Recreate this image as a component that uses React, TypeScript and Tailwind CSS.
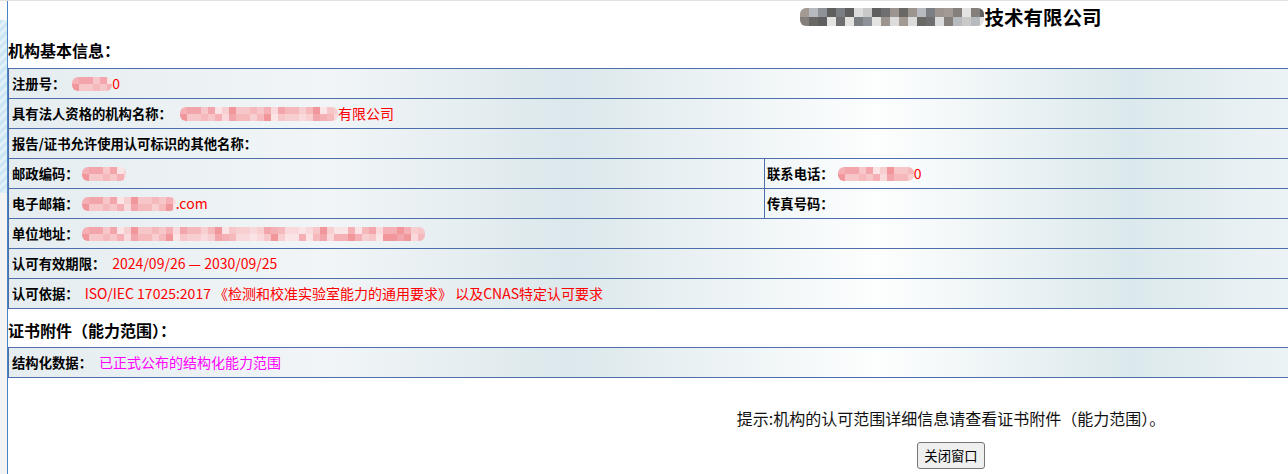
import React from 'react';
import clsx from 'clsx';

// Soft pixelated blocks standing in for the redacted parts of the screenshot
const GREYS = ['#a39a93', '#6f6f71', '#8d9399', '#857f7b', '#9c958f', '#5f5f60', '#b7bbbf', '#dcdcdc', '#e3e3e2', '#6a6864', '#7b7e82', '#c9c9c9'];
const PINKS = ['#f4b0b4', '#f7c6c9', '#f9d9db', '#f1979c', '#f5b9bc', '#fbe4e5', '#f2a5aa', '#f8cfd1'];

function Mosaic({
  width,
  cell = 7,
  rows = 2,
  palette = PINKS,
  className,
}: {
  width: number;
  cell?: number;
  rows?: number;
  palette?: string[];
  className?: string;
}) {
  const cols = Math.ceil(width / cell);
  return (
    <span
      className={clsx('inline-flex shrink-0 flex-col overflow-hidden rounded-[6px] align-middle blur-[0.4px]', className)}
      style={{ width }}
    >
      {Array.from({ length: rows }).map((_, r) => (
        <span key={r} className="flex">
          {Array.from({ length: cols }).map((_, c) => (
            <span
              key={c}
              className="shrink-0"
              style={{
                width: cell,
                height: cell,
                backgroundColor: palette[(c * 5 + r * 3 + ((c * c) % 7)) % palette.length],
              }}
            />
          ))}
        </span>
      ))}
    </span>
  );
}

const rowBg =
  'bg-[linear-gradient(to_right,#e5edf0_0px,#f1f5f7_320px,#dce8ec_560px,#fdfefe_870px,#dce9ec_1120px,#eef4f6_1300px,#fafcfc_1886px)]';

function Row({ children }: { children: React.ReactNode }) {
  return <div className={clsx('flex h-[30px] border-b border-[#4d6ea8]', rowBg)}>{children}</div>;
}

function Label({ children }: { children: React.ReactNode }) {
  return <span className="shrink-0 text-[13.33px] font-bold text-black">{children}</span>;
}

export default function App() {
  return (
    <div className="h-[474px] w-full overflow-hidden bg-white font-['Noto_Sans_CJK_SC','Noto_Sans',sans-serif] text-black">
      <div className="h-px w-full bg-[#e2e2e2]" />
      <div className="flex h-[473px]">
        {/* left frame strip */}
        <div className="flex w-[7px] shrink-0 flex-col bg-[#f3f3f3]">
          <div className="h-[19px] bg-[#fbfbfb]" />
          <div className="h-[173px] bg-[repeating-linear-gradient(135deg,#cde6f6_0px,#cde6f6_3px,#e2f0fa_3px,#e2f0fa_6px)]" />
        </div>
        <div className="w-px shrink-0 bg-[#4a84c4]" />

        <div className="w-[1886px] shrink-0">
          {/* title */}
          <div className="flex h-[31px] items-center justify-center">
            <Mosaic width={184} cell={9} palette={GREYS} className="rounded-[2px]" />
            <span className="text-[19.5px] leading-[22px] font-bold">技术有限公司</span>
          </div>

          <div className="h-[36px] pt-[10px] text-[16px] leading-[16px] font-bold">机构基本信息：</div>

          <div className="border-t border-l border-[#4d6ea8] text-[14px]">
            <Row>
              <div className="flex items-center pl-[3px]">
                <Label>注册号：</Label>
                <Mosaic width={40} className="ml-[7px]" />
                <span className="text-[#ff0000]">0</span>
              </div>
            </Row>
            <Row>
              <div className="flex items-center pl-[3px]">
                <Label>具有法人资格的机构名称：</Label>
                <Mosaic width={158} className="ml-[8px]" />
                <span className="text-[#ff0000]">有限公司</span>
              </div>
            </Row>
            <Row>
              <div className="flex items-center pl-[3px]">
                <Label>报告/证书允许使用认可标识的其他名称：</Label>
              </div>
            </Row>
            <Row>
              <div className="flex w-[756px] items-center border-r border-[#4d6ea8] pl-[3px]">
                <Label>邮政编码：</Label>
                <Mosaic width={44} className="ml-[3px]" />
              </div>
              <div className="flex items-center pl-[2px]">
                <Label>联系电话：</Label>
                <Mosaic width={76} className="ml-[4px]" />
                <span className="text-[#ff0000]">0</span>
              </div>
            </Row>
            <Row>
              <div className="flex w-[756px] items-center border-r border-[#4d6ea8] pl-[3px]">
                <Label>电子邮箱：</Label>
                <Mosaic width={94} className="ml-[3px]" />
                <span className="text-[#ff0000]">.com</span>
              </div>
              <div className="flex items-center pl-[2px]">
                <Label>传真号码：</Label>
              </div>
            </Row>
            <Row>
              <div className="flex items-center pl-[3px]">
                <Label>单位地址：</Label>
                <Mosaic width={343} className="ml-[3px]" />
              </div>
            </Row>
            <Row>
              <div className="flex items-center pl-[3px]">
                <Label>认可有效期限：</Label>
                <span className="ml-[7px] text-[#ff0000]">2024/09/26 — 2030/09/25</span>
              </div>
            </Row>
            <Row>
              <div className="flex items-center pl-[3px]">
                <Label>认可依据：</Label>
                <span className="ml-[6px] text-[#ff0000]">
                  ISO/IEC 17025:2017 《检测和校准实验室能力的通用要求》 以及CNAS特定认可要求
                </span>
              </div>
            </Row>
          </div>

          <div className="h-[38px] pt-[13px] text-[16px] leading-[16px] font-bold">证书附件（能力范围）：</div>

          <div className="border-t border-l border-[#4d6ea8] text-[14px]">
            <Row>
              <div className="flex items-center pl-[3px]">
                <Label>结构化数据：</Label>
                <span className="ml-[7px] text-[#ff00ff]">已正式公布的结构化能力范围</span>
              </div>
            </Row>
          </div>

          <div className="mt-[30px] text-center text-[16px] leading-[20px] text-[#111]">
            提示:机构的认可范围详细信息请查看证书附件（能力范围）。
          </div>
          <div className="mt-[14px] flex justify-center">
            <button
              type="button"
              className="h-[27px] w-[68px] rounded-[3px] border border-[#767676] bg-[#efefef] text-[13.33px] text-black"
            >
              关闭窗口
            </button>
          </div>
        </div>
      </div>
    </div>
  );
}
